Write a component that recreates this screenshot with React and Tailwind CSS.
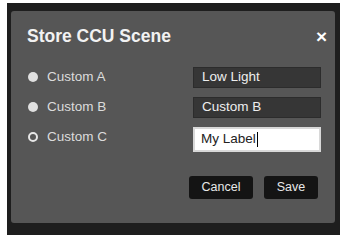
export default function App() {
  const rows = [
    { label: "Custom A", value: "Low Light", checked: false },
    { label: "Custom B", value: "Custom B", checked: false },
    { label: "Custom C", value: "My Label", checked: true },
  ]

  return (
    <div className="w-[343px] h-[237px] bg-white pt-[3px] pl-[7px] font-['Liberation_Sans',Arial,sans-serif]">
      <div className="w-[333px] h-[232px] bg-[#1e1e1e] pt-[8px] pl-[4px] pr-[5px] pb-[12px] flex">
        <div className="flex-1 bg-[#565656] rounded-[3px] flex flex-col">
          {/* Header */}
          <div className="flex items-center justify-between pl-[16px] pr-[8px] pt-[15px] h-[36px]">
            <h1 className="text-[17.5px] font-bold text-[#f2f2f2] leading-none">Store CCU Scene</h1>
            <span className="text-[19px] font-bold text-white leading-none">×</span>
          </div>

          {/* Rows */}
          <div className="flex flex-col gap-[10px] mt-[20px] pl-[17px] pr-[14px]">
            {rows.map(r => (
              <div key={r.label} className="flex items-center justify-between h-[20px]">
                <label className="flex items-center gap-[9px] text-[13.5px] text-[#dcdcdc]">
                  {r.checked ? (
                    <span className="w-[10px] h-[10px] rounded-full border-[2px] border-[#e6e6e6] bg-[#565656]" />
                  ) : (
                    <span className="w-[10px] h-[10px] rounded-full bg-[#e0e0e0]" />
                  )}
                  {r.label}
                </label>
                {r.checked ? (
                  <div className="w-[128px] h-[25px] mt-[4px] bg-white border-[2px] border-[#d8d8d8] flex items-center px-[6px] text-[13.5px] text-[#222]">
                    {r.value}
                    <span className="w-[1px] h-[15px] bg-black ml-[1px]" />
                  </div>
                ) : (
                  <div className="w-[128px] h-[21px] bg-[#363636] border border-[#2c2c2c] flex items-center px-[8px] text-[13.5px] text-[#eeeeee]">
                    {r.value}
                  </div>
                )}
              </div>
            ))}
          </div>

          {/* Buttons */}
          <div className="flex justify-end gap-[11px] mt-[29px] pr-[17px]">
            <button className="w-[64px] h-[23px] bg-[#141414] rounded-[3px] text-[12.5px] text-[#e8e8e8]">Cancel</button>
            <button className="w-[54px] h-[23px] bg-[#141414] rounded-[3px] text-[12.5px] text-[#e8e8e8]">Save</button>
          </div>
        </div>
      </div>
    </div>
  )
}
